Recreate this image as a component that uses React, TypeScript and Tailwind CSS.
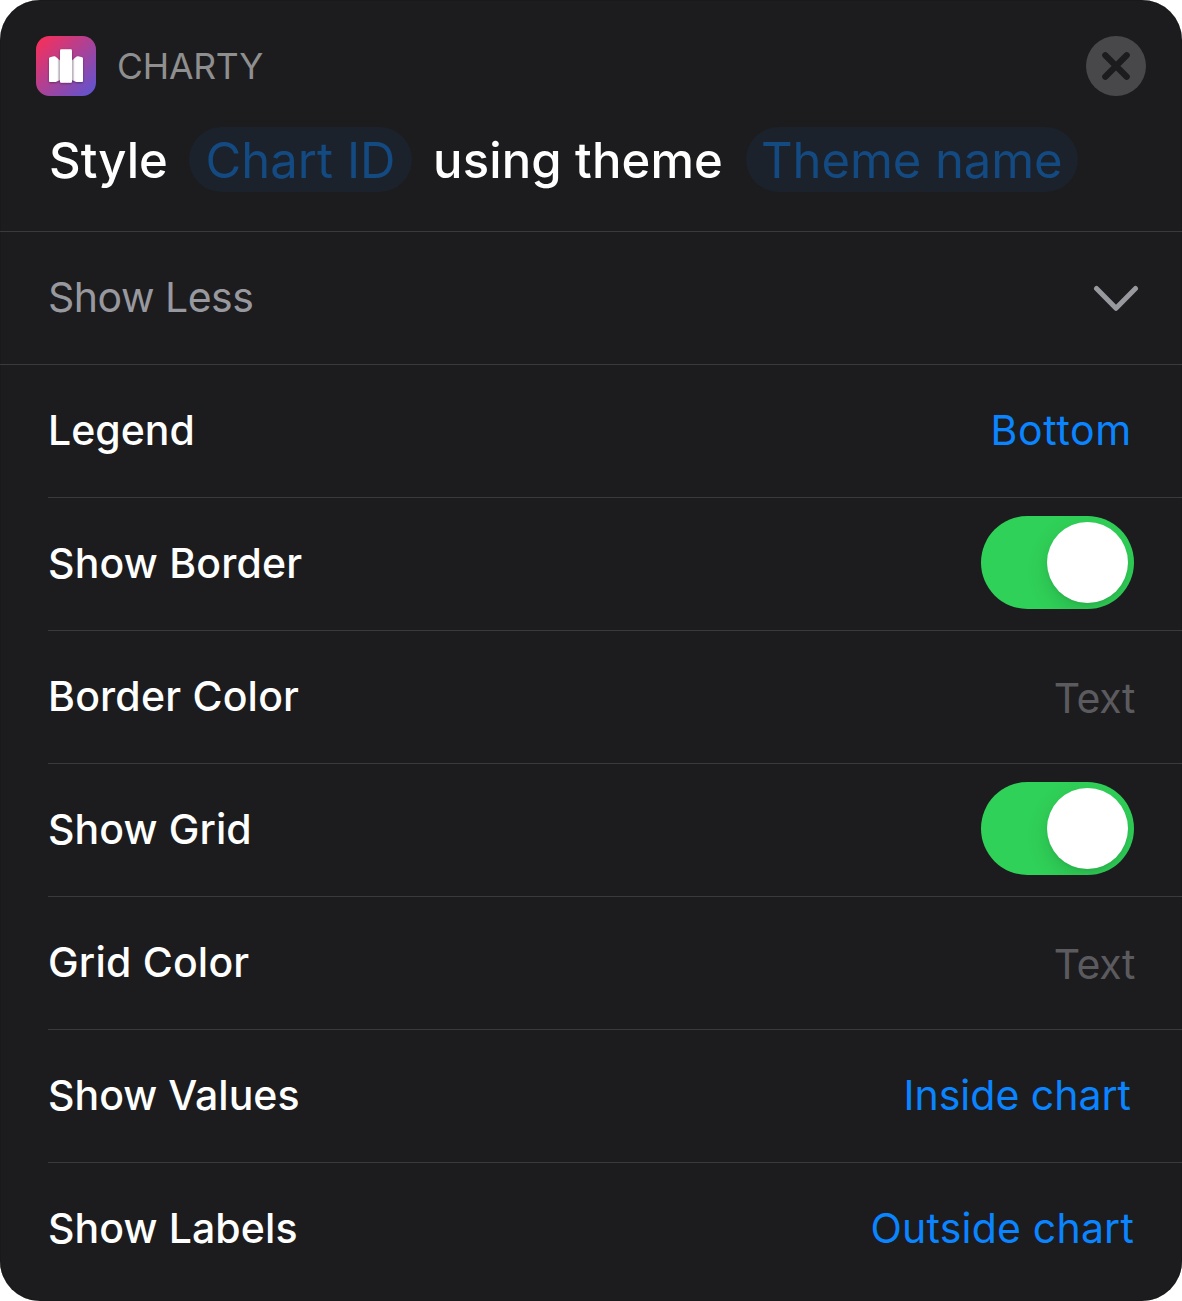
import React from "react";

type RowProps = { label: string; labelClass?: string; last?: boolean; children: React.ReactNode };

function Row({ label, labelClass = "", last, children }: RowProps) {
  return (
    <div
      className={
        last
          ? "ml-12 flex h-[132px] items-center justify-between pr-12"
          : "ml-12 flex h-[133px] items-center justify-between border-b border-[#3a3a3c] pr-12"
      }
    >
      <span className={`pb-px text-[41px] leading-none font-medium text-white ${labelClass}`}>{label}</span>
      {children}
    </div>
  );
}

function Choice({ className, children }: { className: string; children: React.ReactNode }) {
  return <span className={`pb-px text-[41px] leading-none text-[#0a84ff] ${className}`}>{children}</span>;
}

function Placeholder() {
  return <span className="-mr-px pt-[3px] text-[41px] leading-none tracking-[-0.4px] text-[#5b5b5f]">Text</span>;
}

function Toggle() {
  return (
    <span className="mb-[3px] flex h-[93px] w-[153px] items-center justify-end overflow-hidden rounded-full bg-[#30d158] pr-1.5">
      <span className="size-[81px] rounded-full bg-white shadow-[0_8px_22px_rgba(0,0,0,0.14),0_2px_3px_rgba(0,0,0,0.05)]" />
    </span>
  );
}

function AppIcon() {
  return (
    <span className="flex size-[60px] overflow-hidden rounded-[13.5px] bg-linear-to-br/srgb from-[#ff2d55] to-[#5856d6]">
      <svg viewBox="0 0 60 60" className="size-full">
        <defs>
          <filter id="barShadow" x="-30%" y="-30%" width="160%" height="160%">
            <feDropShadow dx="0" dy="0.8" stdDeviation="0.9" floodColor="#000" floodOpacity="0.4" />
          </filter>
        </defs>
        <g filter="url(#barShadow)">
          <path fill="#fff" d="M13 22.500q0-1 1-1.300l4-.9q1-.1 1.700.5l2.300 2v22l-2.300 1.300h-5.700q-1 0-1-1z" />
          <path fill="#fff" d="M47 22.500q0-1-1-1.300l-4-.9q-1-.1-1.700.5l-2.300 2v22l2.300 1.300h5.700q1 0 1-1z" />
          <path fill="#d9d3da" d="M21.800 22.700 24.200 24.500V44l-2.400 1z" />
          <path fill="#d9d3da" d="M38.200 22.700 35.800 24.500V44l2.400 1z" />
        </g>
        <rect x="24" y="13.300" width="12" height="33.400" rx="1.300" fill="#fff" filter="url(#barShadow)" />
      </svg>
    </span>
  );
}

export default function App() {
  return (
    <div className="h-[1301px] w-[1182px] overflow-hidden bg-white font-['Inter',sans-serif] whitespace-nowrap">
      <div className="h-full w-full overflow-hidden rounded-[40px] bg-[#1c1c1e] shadow-[inset_0_0_1px_#000]">
        <header className="h-[232px] border-b border-[#3a3a3c] pt-9">
          <div className="flex h-[60px] items-center px-9">
            <AppIcon />
            <span className="ml-[21px] pt-0.5 text-[35.500px] leading-none tracking-[-0.2px] text-[#8f8f8f]">CHARTY</span>
            <button className="ml-auto flex size-[60px] items-center justify-center rounded-full bg-[#48484a]" aria-label="Close">
              <svg viewBox="0 0 60 60" className="size-full" stroke="#1c1c1e" strokeWidth="6.200" strokeLinecap="round">
                <path d="M19.300 19.300 40.700 40.700M40.700 19.300 19.300 40.700" />
              </svg>
            </button>
          </div>
          <div className="mt-[31px] flex h-[65px] items-center pl-12 text-[49px] leading-none">
            <span className="w-[141px] pt-0.5 pl-px font-medium text-white">Style</span>
            <span className="flex h-[65px] w-[223px] items-center justify-center rounded-full bg-[#1b222c] pt-0.5 text-[#144a82]">
              Chart ID
            </span>
            <span className="ml-[21px] w-[312.500px] pt-0.5 font-medium tracking-[0.15px] text-white">using theme</span>
            <span className="flex h-[65px] w-[332.500px] items-center justify-center rounded-full bg-[#1b222c] pt-0.5 tracking-[-0.1px] text-[#144a82]">
              Theme name
            </span>
          </div>
        </header>
        <div className="flex h-[133px] items-center justify-between border-b border-[#3a3a3c] pr-[43px] pl-12">
          <span className="pb-px text-[41px] leading-none tracking-[-0.5px] text-[#98989f]">Show Less</span>
          <svg
            viewBox="0 0 46 28"
            className="mt-0.5 h-7 w-[46px]"
            fill="none"
            stroke="#98989f"
            strokeWidth="5"
            strokeLinecap="round"
            strokeLinejoin="round"
          >
            <path d="M3.500 3.500 23 23.300 42.500 3.500" />
          </svg>
        </div>
        <Row label="Legend"><Choice className="mr-0.5 tracking-[0.7px]">Bottom</Choice></Row>
        <Row label="Show Border" labelClass="tracking-[0.2px]"><Toggle /></Row>
        <Row label="Border Color" labelClass="tracking-[0.2px]"><Placeholder /></Row>
        <Row label="Show Grid" labelClass="tracking-[0.1px]"><Toggle /></Row>
        <Row label="Grid Color" labelClass="tracking-[0.2px]"><Placeholder /></Row>
        <Row label="Show Values"><Choice className="mr-[3px]">Inside chart</Choice></Row>
        <Row label="Show Labels" labelClass="tracking-[0.1px]" last><Choice className="tracking-[0.2px]">Outside chart</Choice></Row>
      </div>
    </div>
  );
}
